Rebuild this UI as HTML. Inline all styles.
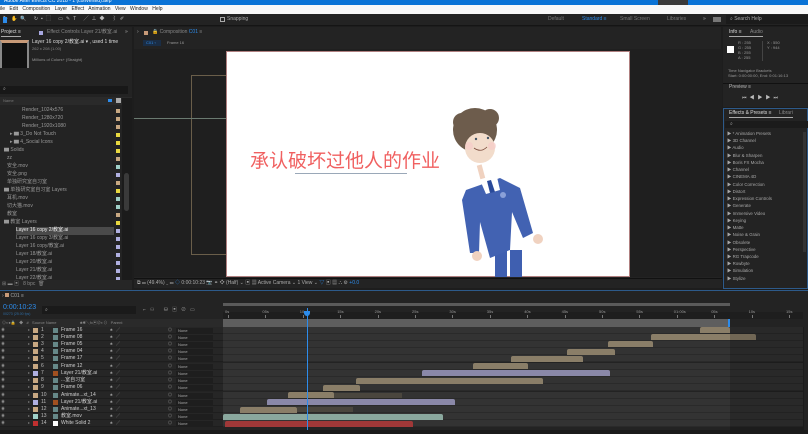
<!DOCTYPE html>
<html><head><meta charset="utf-8"><style>
*{margin:0;padding:0;box-sizing:border-box}
body{width:808px;height:434px;overflow:hidden;background:#1d1d1d;font-family:"Liberation Sans","Noto Sans CJK SC",sans-serif;color:#a8a8a8;position:relative;font-size:5px}
.a{position:absolute;white-space:nowrap}
.t{font-size:5px;line-height:7px}
</style></head><body>
<!-- title bar -->
<div class="a" style="left:0;top:0;width:808px;height:5px;background:#0a73d6"></div>
<div class="a t" style="left:4px;top:-2px;color:#fff">Adobe After Effects CC 2018 - 1 (converted).aep *</div>
<div class="a" style="left:658px;top:0;width:30px;height:5px;background:#3a3a3a"></div>
<!-- menu -->
<div class="a" style="left:0;top:5px;width:808px;height:9px;background:#f8f8f8"></div>
<div class="a t" style="left:0;top:6px;color:#222;word-spacing:3px">ile Edit Composition Layer Effect Animation View Window Help</div>
<!-- toolbar -->
<div class="a" style="left:0;top:14px;width:808px;height:12px;background:#232323;border-bottom:1px solid #151515"></div>
<div class="a t" style="left:3px;top:16px;color:#bbb;letter-spacing:3px">▶✋🔍 ↻▪⬚ ▭✎T ╱⊥◆ ⌇✐</div>
<div class="a" style="left:3px;top:17px;width:4px;height:6px;background:#2d8ceb"></div>
<div class="a" style="left:220px;top:17px;width:5px;height:5px;border:1px solid #aaa"></div>
<div class="a t" style="left:227px;top:16px">Snapping</div>
<div class="a t" style="left:548px;top:16px;color:#777">Default</div>
<div class="a t" style="left:582px;top:16px;color:#2d8ceb">Standard ≡</div>
<div class="a t" style="left:620px;top:16px;color:#777">Small Screen</div>
<div class="a t" style="left:667px;top:16px;color:#777">Libraries</div>
<div class="a t" style="left:703px;top:16px">»</div>
<div class="a" style="left:713px;top:17px;width:8px;height:5px;background:#777"></div>
<div class="a" style="left:726px;top:15px;width:82px;height:9px;background:#1b1b1b"></div>
<div class="a t" style="left:730px;top:16px">⌕ Search Help</div>

<!-- project panel -->
<div class="a" style="left:0;top:27px;width:132px;height:263px;background:#232323"></div>
<div class="a t" style="left:1px;top:29px;color:#ddd;border-bottom:1px solid #aaa">Project ≡</div>
<div class="a" style="left:39px;top:31px;width:4px;height:4px;background:#a8a8e0"></div>
<div class="a t" style="left:47px;top:29px;color:#888">Effect Controls Layer 21/教室.ai</div>
<div class="a t" style="left:125px;top:29px">»</div>
<div class="a" style="left:0;top:40px;width:29px;height:28px;background:#111;border-top:3px solid #c89a78;border-left:2px solid #888;border-right:2px solid #888"></div>
<div class="a t" style="left:32px;top:39px;color:#ddd">Layer 16 copy 2/教室.ai ▾ , used 1 time</div>
<div class="a" style="left:32px;top:46px;font-size:4px;color:#888">262 x 208 (1.00)</div>
<div class="a" style="left:32px;top:57px;font-size:4px;color:#999">Millions of Colors+ (Straight)</div>
<div class="a" style="left:0;top:86px;width:128px;height:8px;background:#181818"></div>
<div class="a t" style="left:3px;top:86px">⌕</div>
<div class="a" style="left:0;top:97px;width:132px;height:8px;background:#2a2a2a"></div>
<div class="a" style="left:3px;top:98px;font-size:4px;color:#777">Name</div>
<div class="a" style="left:108px;top:99px;width:4px;height:3px;background:#2d8ceb"></div>
<div class="a" style="left:116px;top:98px;width:5px;height:5px;background:#aaa"></div>
<div class="a" style="left:122px;top:98px;width:10px;height:190px;background:#1b1b1b"></div>
<div class="a" style="left:124px;top:173px;width:5px;height:38px;background:#3a3a3a;border-radius:3px"></div>
<div id="proj"></div>
<div class="a" style="left:0;top:280px;width:132px;height:9px;background:#262626"></div>
<div class="a t" style="left:2px;top:281px;color:#888">⊞ ▬ ▣ &nbsp; 8 bpc &nbsp;🗑</div>

<!-- comp viewer -->
<div class="a" style="left:134px;top:27px;width:587px;height:261px;background:#232323"></div>
<div class="a t" style="left:137px;top:29px">›</div>
<div class="a" style="left:144px;top:31px;width:4px;height:4px;background:#c89a78"></div>
<div class="a t" style="left:152px;top:29px;color:#888">🔒 Composition <span style="color:#2d8ceb">C01</span> ≡</div>
<div class="a" style="left:143px;top:40px;width:18px;height:6px;background:#1a2d45"></div>
<div class="a" style="left:146px;top:40px;font-size:4px;color:#2d8ceb">C01 ‹</div>
<div class="a" style="left:167px;top:40px;font-size:4px;color:#999">Frame 16</div>
<div class="a" style="left:134px;top:49px;width:588px;height:228px;background:#1f1f1f"></div>
<div class="a" style="left:191px;top:75px;width:40px;height:180px;border:1px solid #6a5e4a;border-right:none"></div>
<div class="a" style="left:134px;top:118px;width:92px;height:1px;background:#6a7a70"></div>
<div class="a" style="left:226px;top:51px;width:404px;height:226px;background:#fff;border:1px solid #b08080"></div>
<div class="a" style="left:250px;top:151px;font-size:19px;line-height:22px;color:#f06060;font-family:'Liberation Sans','Noto Sans CJK SC',sans-serif">承认破坏过他人的作业</div>
<div class="a" style="left:295px;top:173px;width:112px;height:1px;background:#9aa8b8"></div>
<svg class="a" style="left:0;top:0" width="808" height="434">
 <rect x="495" y="250" width="12" height="27" fill="#3f5fb0"/>
 <rect x="510" y="250" width="12" height="27" fill="#3f5fb0"/>
 <polygon points="466,190 500,178 520,188 533,233 523,238 512,212 510,250 490,258 480,222 479,253 470,253 462,200" fill="#4262b2"/>
 <circle cx="477" cy="256" r="5" fill="#f0d2c0"/>
 <circle cx="538" cy="239" r="5" fill="#f0d2c0"/>
 <polygon points="480,180 497,177 500,190 486,194" fill="#fff"/>
 <polygon points="487,181 491,180 495,192 490,193" fill="#2a4a9a"/>
 <rect x="478" y="165" width="5" height="14" fill="#f0d2c0" transform="rotate(-15 480 170)"/>
 <circle cx="475" cy="130" r="22" fill="#6d5c4c"/>
 <circle cx="462" cy="122" r="9" fill="#6d5c4c"/>
 <circle cx="490" cy="118" r="9" fill="#6d5c4c"/>
 <circle cx="480" cy="148" r="15" fill="#f2dccb"/>
 <circle cx="469" cy="146" r="4" fill="#f7c8c8" opacity=".6"/>
 <circle cx="492" cy="146" r="4" fill="#f7c8c8" opacity=".6"/>
 <circle cx="476" cy="139" r="1.2" fill="#456"/><circle cx="488" cy="138" r="1.2" fill="#456"/>
 <path d="M474 148 Q481 153 487 147" stroke="#7a4a3a" fill="none" stroke-width=".8"/>
 <circle cx="503" cy="195" r="3" fill="#8aa0d8"/>
</svg>
<div class="a" style="left:134px;top:278px;width:588px;height:10px;background:#232323;border-top:1px solid #111"></div>
<div class="a t" style="left:137px;top:280px;color:#aaa">⧉ ▭ (49.4%) ⌄ ▭ <span style="color:#2d8ceb">◇</span> 0:00:10:23 📷 ⚭ ❖ (Half) ⌄ ▣ ▦ Active Camera ⌄ 1 View ⌄ <span style="color:#2d8ceb">▽</span> ▣ ▦ ⛬ ⚙ <span style="color:#2d8ceb">+0.0</span></div>

<!-- right panels -->
<div class="a" style="left:723px;top:27px;width:85px;height:78px;background:#232323"></div>
<div class="a t" style="left:729px;top:29px;color:#ddd;border-bottom:1px solid #aaa">Info ≡ <span style="color:#888;margin-left:7px">Audio</span></div>
<div class="a" style="left:727px;top:46px;width:7px;height:7px;background:#fff"></div>
<div class="a" style="left:738px;top:40px;font-size:4px;line-height:5px;color:#999">R : 255<br>G : 255<br>B : 255<br>A : 255</div>
<div class="a" style="left:767px;top:40px;font-size:4px;line-height:5px;color:#999">X : 550<br>Y : 944</div>
<div class="a" style="left:762px;top:41px;width:1px;height:20px;background:#444"></div>
<div class="a" style="left:728px;top:68px;font-size:4px;line-height:5px;color:#999">Time Navigator Brackets<br>Start: 0:00:00:00, End: 0:01:16:13</div>
<div class="a" style="left:723px;top:83px;width:85px;height:24px;background:#232323;border-top:1px solid #111"></div>
<div class="a t" style="left:729px;top:84px;color:#bbb">Preview ≡</div>
<div class="a t" style="left:742px;top:95px;color:#bbb;letter-spacing:3px">⏮◀▶▶⏭</div>
<div class="a" style="left:723px;top:108px;width:85px;height:181px;background:#232323;border:1px solid #2d5a8a"></div>
<div class="a t" style="left:729px;top:110px;color:#ddd;border-bottom:1px solid #aaa">Effects &amp; Presets ≡ <span style="color:#888;margin-left:6px">Librari</span></div>
<div class="a" style="left:725px;top:121px;width:83px;height:7px;background:#1b1b1b"></div>
<div class="a t" style="left:730px;top:121px">⌕</div>
<div class="a" style="left:727px;top:130px;font-size:4.4px;line-height:7.23px;color:#a8a8a8">
▶ * Animation Presets<br>▶ 3D Channel<br>▶ Audio<br>▶ Blur &amp; Sharpen<br>▶ Boris FX Mocha<br>▶ Channel<br>▶ CINEMA 4D<br>▶ Color Correction<br>▶ Distort<br>▶ Expression Controls<br>▶ Generate<br>▶ Immersive Video<br>▶ Keying<br>▶ Matte<br>▶ Noise &amp; Grain<br>▶ Obsolete<br>▶ Perspective<br>▶ RG Trapcode<br>▶ Rowbyte<br>▶ Simulation<br>▶ Stylize</div>
<div class="a" style="left:803px;top:132px;width:3px;height:120px;background:#333"></div>

<!-- timeline -->
<div class="a" style="left:0;top:290px;width:808px;height:144px;background:#232323;border-top:1px solid #2d5a8a"></div>
<div class="a t" style="left:2px;top:293px">› <span style="display:inline-block;width:4px;height:4px;background:#c89a78"></span> C01 ≡</div>
<div class="a" style="left:3px;top:304px;font-size:7px;color:#2d8ceb">0:00:10:23</div>
<div class="a" style="left:3px;top:312px;font-size:3.5px;color:#2d6aa0">00273 (25.00 fps)</div>
<div class="a" style="left:42px;top:306px;width:94px;height:8px;background:#1a1a1a"></div>
<div class="a t" style="left:45px;top:307px">⌕</div>
<div class="a t" style="left:143px;top:307px;color:#999;letter-spacing:4px">⌐⚇ ⛁▣⊘▭</div>
<div class="a" style="left:0;top:319px;width:223px;height:8px;background:#2a2a2a"></div>
<div class="a" style="left:2px;top:320px;font-size:4px;color:#888">⊙◐●🔒 &nbsp; ◆ &nbsp; # &nbsp; Source Name &nbsp; &nbsp; &nbsp; &nbsp; &nbsp; &nbsp; &nbsp; &nbsp; &nbsp; &nbsp; ♣✱╲fx▣⊘◐⊙ &nbsp; Parent</div>
<div class="a" style="left:223px;top:303px;width:507px;height:3px;background:#5a5a5a"></div>
<div class="a" style="left:223px;top:312px;width:580px;height:7px;background:#1e1e1e"></div>
<div class="a" style="left:223px;top:319px;width:506px;height:8px;background:#5e5e5e"></div>
<div class="a" style="left:728px;top:319px;width:2px;height:8px;background:#2d8ceb"></div>
<div id="ruler"></div>
<div id="rows"></div>
<div class="a" style="left:730px;top:327px;width:74px;height:103px;background:rgba(0,0,0,.18)"></div>
<div class="a" style="left:307px;top:308px;width:1px;height:122px;background:#2d8ceb"></div>
<div class="a" style="left:304px;top:311px;width:6px;height:5px;background:#2d8ceb;border-radius:0 0 3px 3px"></div>
<div class="a" style="left:0;top:430px;width:808px;height:4px;background:#1a1a1a"></div>
<script>
var p=[["Render_1024x576",'#c8a882',18],["Render_1280x720",'#c8a882',18],["Render_1920x1080",'#c8a882',18],["▸ ▆ 3_Do Not Touch",'#e8d840',6],["▸ ▆ 4_Social Icons",'#e8d840',6],["▆ Solids",'#e8d840',0],["zz",'#c8a882',3],["安全.mov",'#a0d0c8',3],["安全.png",'#b0b0e0',3],["单独研究室自习室",'#c8a882',3],["▆ 单独研究室自习室 Layers",'#e8d840',0],["耳机.mov",'#a0d0c8',3],["切大猫.mov",'#a0d0c8',3],["教室",'#c8a882',3],["▆ 教室 Layers",'#e8d840',0],["Layer 16 copy 2/教室.ai",'#b0b0e0',12],["Layer 16 copy 3/教室.ai",'#b0b0e0',12],["Layer 16 copy/教室.ai",'#b0b0e0',12],["Layer 18/教室.ai",'#b0b0e0',12],["Layer 20/教室.ai",'#b0b0e0',12],["Layer 21/教室.ai",'#b0b0e0',12],["Layer 22/教室.ai",'#b0b0e0',12]];
var h='';p.forEach(function(r,i){var y=107+i*8;
if(i==15)h+='<div class="a" style="left:16px;top:'+(y)+'px;width:98px;height:8px;background:#4a4a4a"></div>';
h+='<div class="a t" style="left:'+(r[2]+4)+'px;top:'+y+'px;color:'+(i==15?'#eee':'#999')+'">'+r[0]+'</div><div class="a" style="left:116px;top:'+(y+2)+'px;width:4px;height:4px;background:'+r[1]+'"></div>';});
document.getElementById('proj').innerHTML=h;
var rl='';var lab=['0s','05s','10s','15s','20s','25s','30s','35s','40s','45s','50s','55s','01:00s','05s','10s','15s'];
lab.forEach(function(l,i){var x=225+i*37.4;rl+='<div class="a" style="left:'+x+'px;top:309px;font-size:4px;color:#999">'+l+'</div><div class="a" style="left:'+(x+3)+'px;top:315px;width:1px;height:3px;background:#777"></div>';});
document.getElementById('ruler').innerHTML=rl;
var L=[["Frame 16",'#c8a882'],["Frame 08",'#c8a882'],["Frame 05",'#c8a882'],["Frame 04",'#c8a882'],["Frame 17",'#c8a882'],["Frame 12",'#c8a882'],["Layer 21/教室.ai",'#b0b0e0'],["...室自习室",'#c8a882'],["Frame 06",'#c8a882'],["Animate...xt_14",'#c8a882'],["Layer 21/教室.ai",'#b0b0e0'],["Animate...xt_13",'#c8a882'],["教室.mov",'#a0d0c8'],["White Solid 2",'#c03030']];
var B=[[700,730],[651,756],[608,653],[567,615],[511,583],[473,528],[422,610],[356,543],[323,360],[288,334],[267,455],[240,297],[223,443],[225,413]];
var D=[null,null,null,null,null,null,null,null,null,[334,402],null,[297,353],null,null];
var bc=['#8a7e68','#8a7e68','#8a7e68','#8a7e68','#8a7e68','#8a7e68','#8a88a8','#8a7e68','#8a7e68','#8a7e68','#8a88a8','#8a7e68','#8aa89e','#a03838'];
var s='';L.forEach(function(r,i){var y=326.5+i*7.23;
s+='<div class="a" style="left:0;top:'+y+'px;width:223px;height:7px;background:#262626;border-bottom:1px solid #1e1e1e"></div>';
s+='<div class="a" style="left:223px;top:'+y+'px;width:580px;height:7px;background:#333;border-bottom:1px solid #2a2a2a"></div>';
s+='<div class="a" style="left:1px;top:'+y+'px;font-size:4px;color:#888">◉</div>';
s+='<div class="a" style="left:33px;top:'+(y+1)+'px;width:5px;height:5px;background:'+r[1]+'"></div>';
s+='<div class="a" style="left:28px;top:'+y+'px;font-size:4px;color:#777">▸</div>';
s+='<div class="a" style="left:41px;top:'+y+'px;font-size:5px;color:#bbb">'+(i+1)+'</div>';
s+='<div class="a" style="left:53px;top:'+(y+1)+'px;width:5px;height:5px;background:'+(i==13?'#fff':(r[1]=='#b0b0e0'?'#a05020':'#688'))+'"></div>';
s+='<div class="a" style="left:61px;top:'+y+'px;font-size:5px;line-height:7px;color:#ccc">'+r[0]+'</div>';
s+='<div class="a" style="left:110px;top:'+y+'px;font-size:4px;color:#999">♣ &nbsp; ╱</div>';
s+='<div class="a" style="left:168px;top:'+y+'px;font-size:4px;color:#999">◎</div>';
s+='<div class="a" style="left:176px;top:'+(y+1)+'px;width:37px;height:5px;background:#1e1e1e;font-size:4px;color:#aaa;padding-left:2px;line-height:5px">None</div>';
if(D[i])s+='<div class="a" style="left:'+D[i][0]+'px;top:'+(y+1)+'px;width:'+(D[i][1]-D[i][0])+'px;height:5px;background:#4a463e"></div>';
s+='<div class="a" style="left:'+B[i][0]+'px;top:'+(y+0.5)+'px;width:'+(B[i][1]-B[i][0])+'px;height:6px;background:'+bc[i]+';border-radius:2px 2px 0 0"></div>';});
document.getElementById('rows').innerHTML=s;
</script>
</body></html>
